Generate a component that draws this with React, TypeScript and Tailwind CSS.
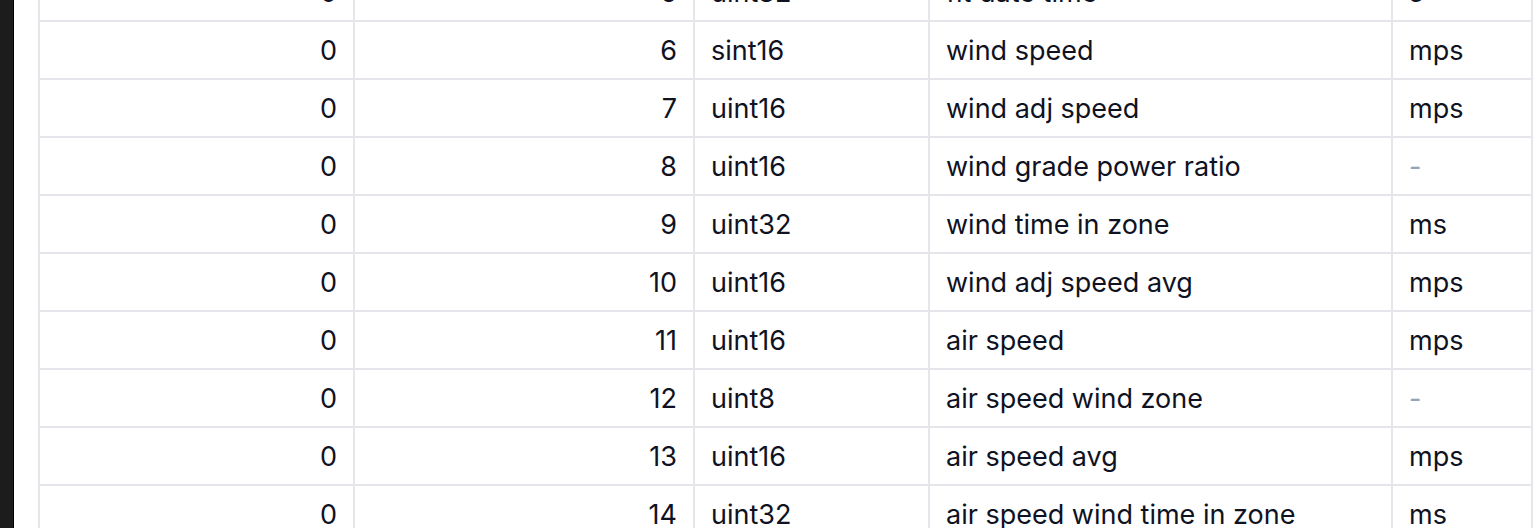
import React from 'react';

type Field = {
  msg: string;
  num: string;
  type: string;
  name: string;
  units: string;
};

const fields: Field[] = [
  { msg: '0', num: '5', type: 'uint32', name: 'fit date time', units: 's' },
  { msg: '0', num: '6', type: 'sint16', name: 'wind speed', units: 'mps' },
  { msg: '0', num: '7', type: 'uint16', name: 'wind adj speed', units: 'mps' },
  { msg: '0', num: '8', type: 'uint16', name: 'wind grade power ratio', units: '' },
  { msg: '0', num: '9', type: 'uint32', name: 'wind time in zone', units: 'ms' },
  { msg: '0', num: '10', type: 'uint16', name: 'wind adj speed avg', units: 'mps' },
  { msg: '0', num: '11', type: 'uint16', name: 'air speed', units: 'mps' },
  { msg: '0', num: '12', type: 'uint8', name: 'air speed wind zone', units: '' },
  { msg: '0', num: '13', type: 'uint16', name: 'air speed avg', units: 'mps' },
  { msg: '0', num: '14', type: 'uint32', name: 'air speed wind time in zone', units: 'ms' },
];

const cell = 'flex h-[58px] items-center border-b-2 border-r-2 border-[#e5e5ec] px-4 pt-[2px]';

export default function App() {
  return (
    <div
      className="flex h-[528px] w-[1534px] overflow-hidden bg-white text-[27px] text-[#0f1222]"
      style={{ fontFamily: 'Inter, "Noto Sans", sans-serif' }}
    >
      <div className="h-full w-[14px] shrink-0 border-r border-black bg-[#1c1c1c]" />

      <div className="pl-[24px]">
        <div className="mt-[-38px] w-[1495px] border-l-2 border-t-2 border-[#e5e5ec]">
          {fields.map((f) => (
            <div key={f.num} className="grid grid-cols-[315px_340px_235px_463px_140px]">
              <div className={`${cell} justify-end`}>{f.msg}</div>
              <div className={`${cell} justify-end`}>{f.num}</div>
              <div className={cell}>{f.type}</div>
              <div className={cell}>{f.name}</div>
              <div className={cell}>
                {f.units ? f.units : <span className="text-[#94a3b8]">-</span>}
              </div>
            </div>
          ))}
        </div>
      </div>
    </div>
  );
}
